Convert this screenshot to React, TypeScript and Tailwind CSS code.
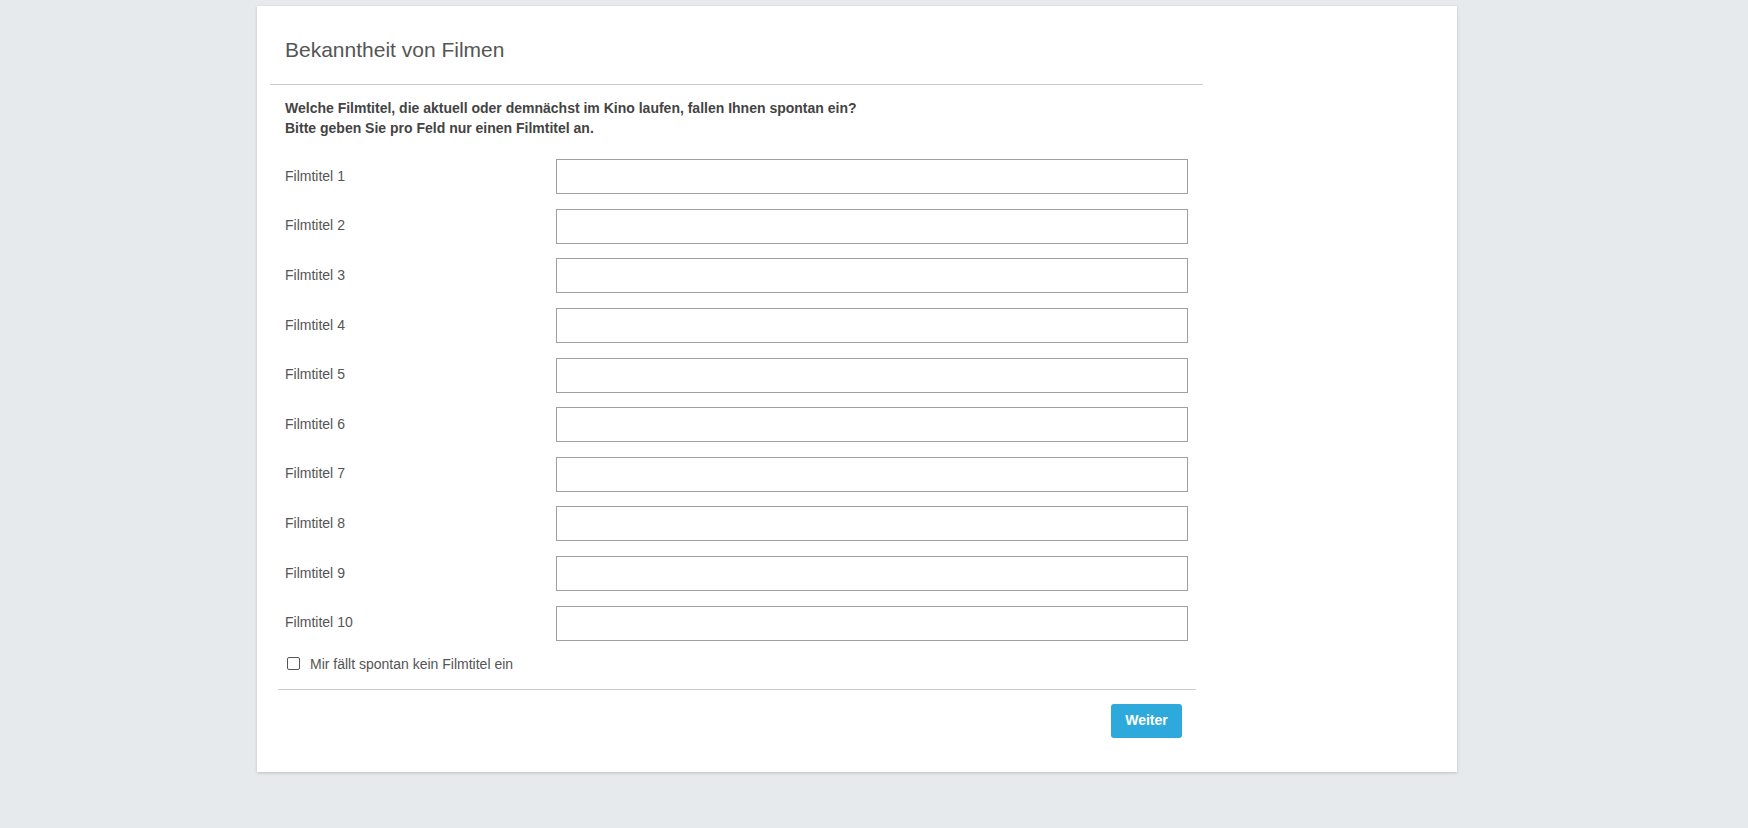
import React from "react";

export default function App() {
  const rows = Array.from({ length: 10 }, (_, i) => i + 1);
  return (
    <div className="min-h-[828px] w-full bg-[#e6eaed] pt-[6px] pb-[55px]" style={{ fontFamily: '"Liberation Sans", Arial, sans-serif' }}>
      <div className="ml-[257px] w-[1200px] bg-white shadow-[0_1px_3px_rgba(0,0,0,0.18)] pb-[34.6px]">
        <div className="ml-[13px] w-[933px]">
          <div className="h-[79px] border-b border-[#cccccc] pl-[15px] pt-[32px]">
            <h1 className="text-[21px] leading-[24px] text-[#555555] font-normal">Bekanntheit von Filmen</h1>
          </div>
          <div className="px-[15px] pt-[12.5px] text-[14px] leading-[20px] font-bold text-[#444444]">
            <div>Welche Filmtitel, die aktuell oder demnächst im Kino laufen, fallen Ihnen spontan ein?</div>
            <div>Bitte geben Sie pro Feld nur einen Filmtitel an.</div>
          </div>
          <div className="mt-[21.8px] flex flex-col gap-[14.6px] px-[15px]">
            {rows.map((n) => (
              <div key={n} className="flex items-center">
                <label className="w-[271px] shrink-0 text-[14px] leading-[20px] text-[#555555] pb-[2px]">Filmtitel {n}</label>
                <input type="text" className="h-[35px] w-[633px] border border-[#a0a0a0] bg-white outline-none px-2 text-[14px]" />
              </div>
            ))}
          </div>
          <div className="mt-[16.5px] flex h-[13px] items-center pl-[17px]">
            <span className="box-border block h-[13px] w-[13px] rounded-[2px] border-[1.5px] border-[#555555]" />
            <span className="ml-[10px] text-[14px] leading-[16px] text-[#555555]">Mir fällt spontan kein Filmtitel ein</span>
          </div>
          <div className="ml-[8px] mt-[19px] w-[918px]">
            <div className="h-px bg-[#cccccc]" />
            <div className="mt-[13.6px] flex justify-end pr-[14px]">
              <button className="h-[34px] w-[71px] rounded-[3px] bg-[#2ea9dc] text-[14px] font-bold text-white">Weiter</button>
            </div>
          </div>
        </div>
      </div>
    </div>
  );
}
